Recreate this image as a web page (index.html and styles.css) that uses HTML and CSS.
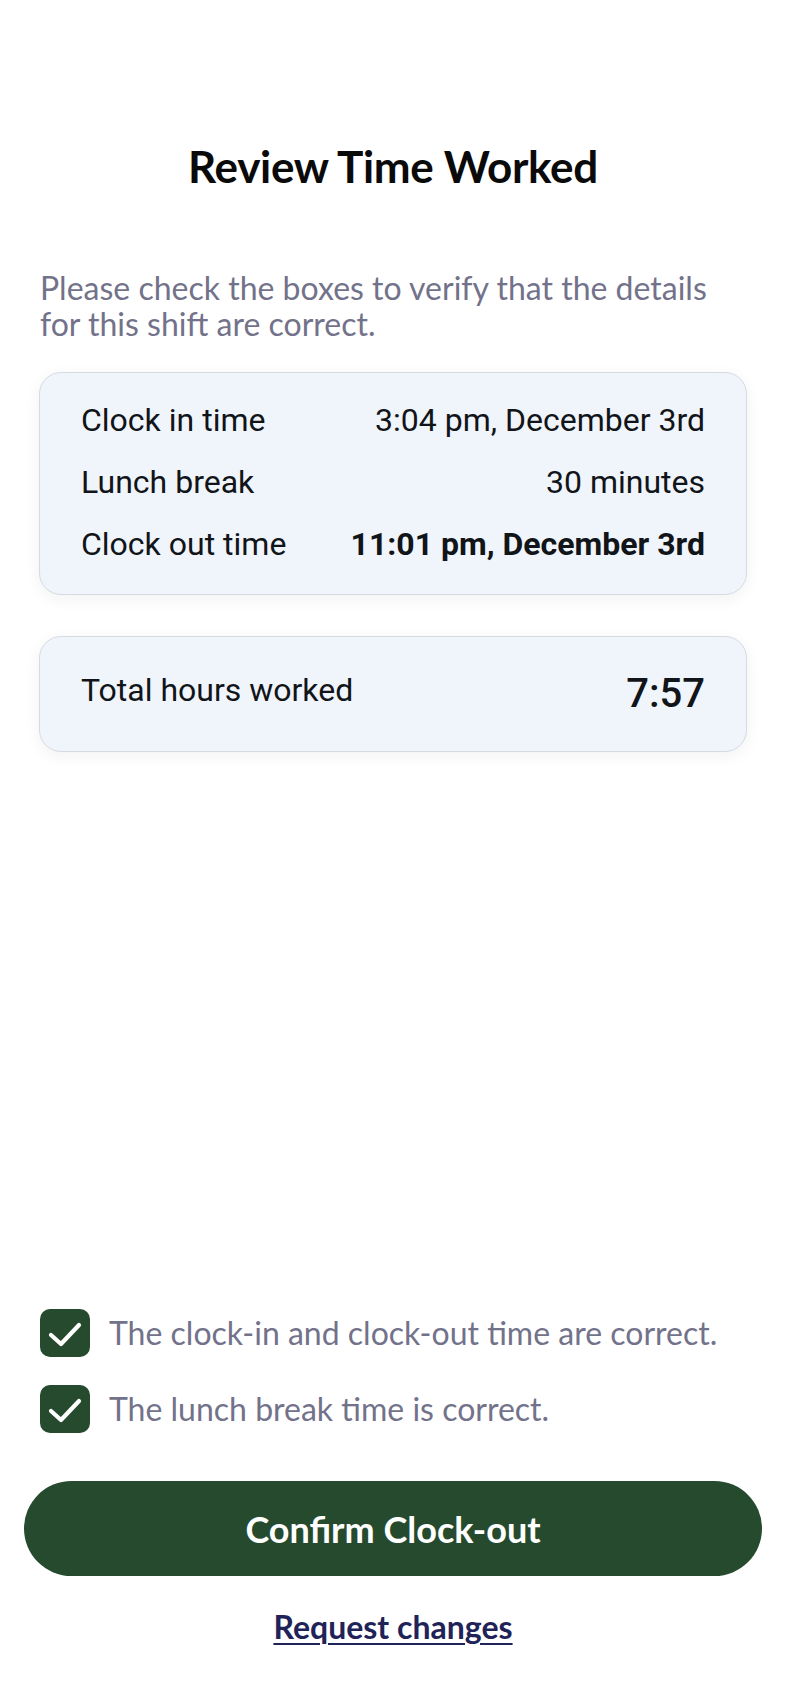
FILE: index.html
```html
<!DOCTYPE html>
<html lang="en">
<head>
<meta charset="utf-8">
<title>Review Time Worked</title>
<link rel="stylesheet" href="styles.css">
</head>
<body>
<main class="page">
  <h1 class="title">Review Time Worked</h1>
  <p class="intro">Please check the boxes to verify that the details for this shift are correct.</p>

  <section class="card details">
    <div class="row"><span class="label">Clock in time</span><span class="value">3:04 pm, December 3rd</span></div>
    <div class="row"><span class="label">Lunch break</span><span class="value">30 minutes</span></div>
    <div class="row"><span class="label">Clock out time</span><span class="value strong">11:01 pm, December 3rd</span></div>
  </section>

  <section class="card total">
    <span class="label total-label">Total hours worked</span>
    <span class="total-value">7:57</span>
  </section>

  <div class="spacer"></div>

  <div class="checks">
    <label class="check">
      <span class="box"><svg viewBox="0 0 50 50" width="50" height="50"><path d="M11 27 L21 36 L39 17" fill="none" stroke="#fff" stroke-width="4.2" stroke-linecap="round" stroke-linejoin="round"/></svg></span>
      <span class="check-text">The clock-in and clock-out time are correct.</span>
    </label>
    <label class="check">
      <span class="box"><svg viewBox="0 0 50 50" width="50" height="50"><path d="M11 27 L21 36 L39 17" fill="none" stroke="#fff" stroke-width="4.2" stroke-linecap="round" stroke-linejoin="round"/></svg></span>
      <span class="check-text">The lunch break time is correct.</span>
    </label>
  </div>

  <button class="confirm" type="button">Confirm Clock-out</button>
  <a class="request" href="#">Request changes</a>
</main>
</body>
</html>
```

FILE: styles.css
```css
* { box-sizing: border-box; }
html, body { margin: 0; padding: 0; background: #ffffff; }
body { font-family: "Lato", "Noto Sans", sans-serif; }

.page {
  min-height: 1704px;
  display: flex;
  flex-direction: column;
  padding: 141px 39px 59px;
}

.title {
  margin: 0;
  text-align: center;
  font-size: 44px;
  line-height: 50px;
  font-weight: 700;
  color: #0a0a0a;
  letter-spacing: -0.3px;
}

.intro {
  margin: 79px 0 0;
  padding-left: 1px;
  font-size: 32px;
  line-height: 36px;
  color: #72728a;
}

.card {
  background: #f0f4fb;
  border: 1px solid #d6dae1;
  border-radius: 22px;
  box-shadow: 0 4px 16px rgba(30, 40, 60, 0.06);
  font-family: "Roboto", "Liberation Sans", sans-serif;
  color: #111418;
}

.details {
  margin-top: 30px;
  padding: 28px 41px 31px;
  display: flex;
  flex-direction: column;
  gap: 24px;
}

.row {
  display: flex;
  justify-content: space-between;
  align-items: center;
  font-size: 32px;
  line-height: 38px;
}

.value.strong { font-weight: 700; }

.total {
  margin-top: 41px;
  height: 116px;
  padding: 0 41px;
  display: flex;
  justify-content: space-between;
  align-items: center;
}

.total-label {
  font-size: 32px;
  line-height: 38px;
  margin-bottom: 8px;
}

.total-value {
  font-size: 40px;
  line-height: 46px;
  font-weight: 500;
}

.spacer { flex: 1; }

.checks {
  display: flex;
  flex-direction: column;
  gap: 28px;
  padding-left: 1px;
}

.check {
  display: flex;
  align-items: center;
  gap: 19px;
}

.box {
  width: 50px;
  height: 48px;
  border-radius: 10px;
  background: #264a2e;
  display: flex;
  align-items: center;
  justify-content: center;
  flex: none;
}

.box svg { display: block; }

.check-text {
  font-size: 32px;
  line-height: 36px;
  color: #72728a;
}

.confirm {
  margin: 48px -15px 0;
  height: 95px;
  border: none;
  border-radius: 48px;
  background: #264a2e;
  color: #ffffff;
  font-family: "Lato", "Noto Sans", sans-serif;
  font-size: 36px;
  font-weight: 700;
  cursor: pointer;
}

.request {
  margin-top: 33px;
  align-self: center;
  font-size: 32px;
  line-height: 36px;
  font-weight: 700;
  color: #1f2358;
  text-decoration: underline;
  text-underline-offset: 4px;
  text-decoration-thickness: 2px;
}
```
